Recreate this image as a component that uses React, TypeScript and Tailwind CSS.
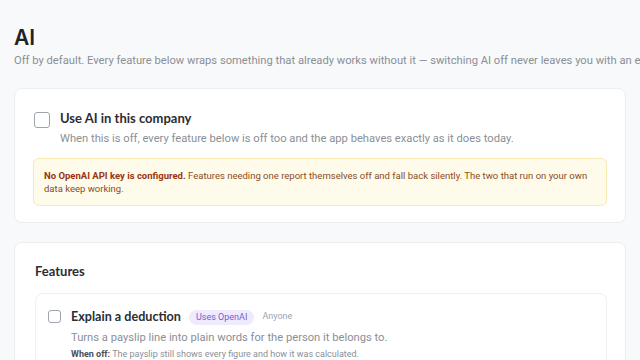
const heading = { fontFamily: 'Lato, "Noto Sans", sans-serif' };

function Box({ size = 'lg' }: { size?: 'lg' | 'sm' }) {
    return (
        <span
            className={
                size === 'lg'
                    ? 'mt-[2px] w-4 h-4 shrink-0 rounded-[3px] border-[1.5px] border-[#9ca3af] bg-white'
                    : 'mt-[2px] w-[13px] h-[13px] shrink-0 rounded-[3px] border-[1.5px] border-[#9ca3af] bg-white'
            }
        />
    );
}

export default function App() {
    return (
        <div
            className="min-h-screen w-[640px] h-[360px] overflow-hidden bg-[#f8f9fa] px-[14px] pt-[25px] text-[#1f2328]"
            style={{ fontFamily: 'Roboto, "Liberation Sans", sans-serif' }}
        >
            {/* Page header */}
            <h1 className="text-[21px] leading-[26px] font-semibold text-[#1f2328]" style={{ fontFamily: 'Inter, sans-serif' }}>
                AI
            </h1>
            <p className="mt-[2px] text-[11.2px] leading-[16px] text-[#8a8f96] whitespace-nowrap">
                Off by default. Every feature below wraps something that already works without it — switching AI off never leaves you with an empty screen.
            </p>

            {/* Master switch card */}
            <div className="mt-[19px] rounded-lg border border-[#eceef0] bg-white px-[18px] pt-[21px] pb-[16px]">
                <div className="flex gap-[10px] pl-px">
                    <Box />
                    <div>
                        <h2 className="text-[13px] leading-[17px] font-bold text-[#2a2e33]" style={heading}>
                            Use AI in this company
                        </h2>
                        <p className="mt-[4px] text-[11.2px] leading-[16px] text-[#8a8f96]">
                            When this is off, every feature below is off too and the app behaves exactly as it does today.
                        </p>
                    </div>
                </div>

                <div className="mt-[11px] rounded-md border border-[#f7eab0] bg-[#fffbea] px-[10px] py-[10px] text-[9.5px] leading-[13px] text-[#8a4b1c]">
                    <span className="font-bold text-[#9a3412]">No OpenAI API key is configured.</span> Features needing one report themselves off and fall back silently. The two that run on your own data keep working.
                </div>
            </div>

            {/* Features card */}
            <div className="mt-[19px] rounded-lg border border-[#eceef0] bg-white pl-[20px] pr-[18px] pt-[20px] pb-4">
                <h3 className="text-[13px] leading-[16px] font-bold text-[#2a2e33]" style={heading}>
                    Features
                </h3>

                <div className="mt-[14px] rounded-lg border border-[#eef0f2] bg-white px-[12px] pt-[14px] pb-3">
                    <div className="flex gap-[10px]">
                        <Box size="sm" />
                        <div>
                            <div className="flex items-center gap-2">
                                <span className="text-[12.6px] leading-[18px] font-bold text-[#2a2e33]" style={heading}>
                                    Explain a deduction
                                </span>
                                <span className="rounded-full bg-[#efeafe] px-[7px] py-[2px] text-[9px] leading-[11px] text-[#7c5ccf]">
                                    Uses OpenAI
                                </span>
                                <span className="text-[9px] text-[#9ca3af]">Anyone</span>
                            </div>
                            <p className="mt-[4px] text-[11.2px] leading-[16px] text-[#8a8f96]">
                                Turns a payslip line into plain words for the person it belongs to.
                            </p>
                            <p className="mt-[2px] text-[9px] leading-[13px] text-[#8a8f96]">
                                <span className="font-bold text-[#4b5058]">When off:</span> The payslip still shows every figure and how it was calculated.
                            </p>
                        </div>
                    </div>
                </div>
            </div>
        </div>
    );
}
